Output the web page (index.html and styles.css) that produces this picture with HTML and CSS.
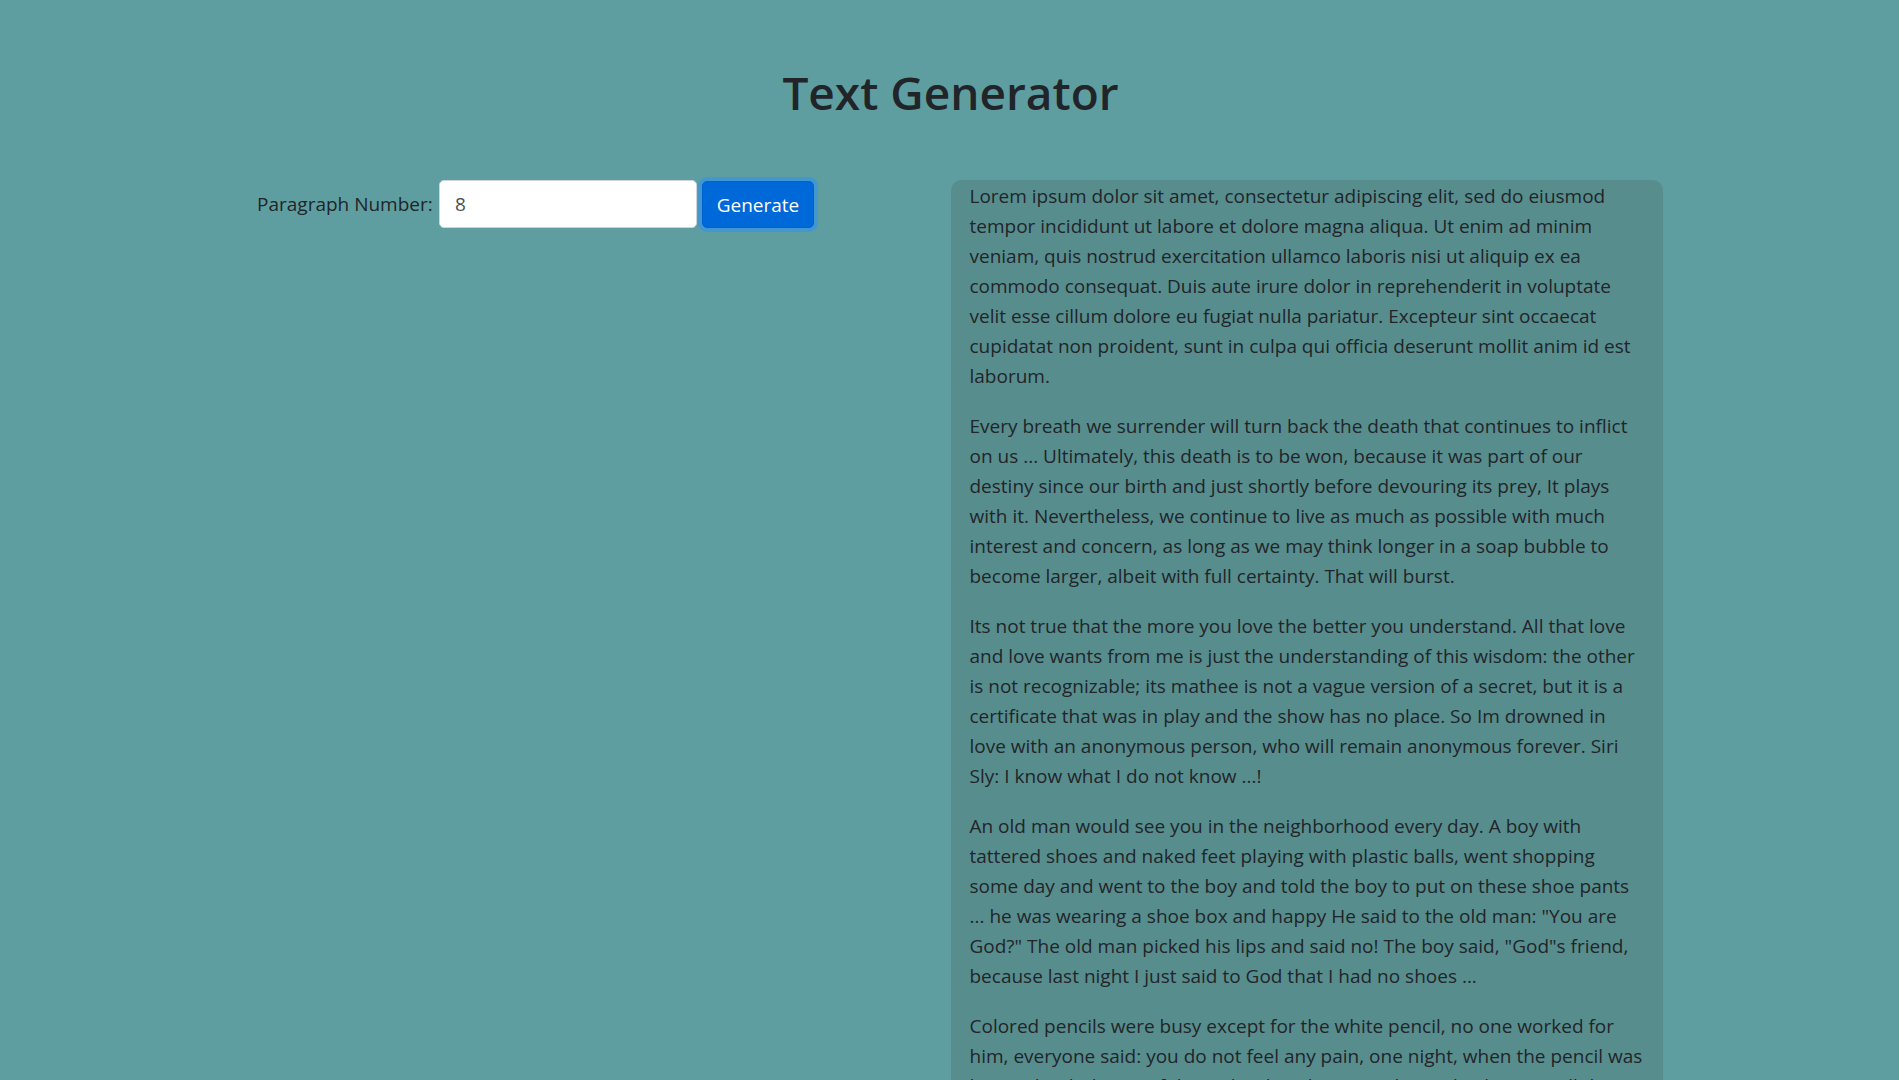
FILE: index.html
```html
<!DOCTYPE html>
<html lang="en">
<head>
<meta charset="utf-8">
<title>Text Generator</title>
<link rel="stylesheet" href="styles.css">
</head>
<body>
<main class="container">
  <h1 class="title">Text Generator</h1>
  <div class="row">
    <form class="generator">
      <label class="label" for="count">Paragraph Number:</label>
      <input class="field" id="count" type="text" value="8">
      <button class="button" type="button">Generate</button>
    </form>
    <section class="output">
      <p>Lorem ipsum dolor sit amet, consectetur adipiscing elit, sed do eiusmod<br>tempor incididunt ut labore et dolore magna aliqua. Ut enim ad minim<br>veniam, quis nostrud exercitation ullamco laboris nisi ut aliquip ex ea<br>commodo consequat. Duis aute irure dolor in reprehenderit in voluptate<br>velit esse cillum dolore eu fugiat nulla pariatur. Excepteur sint occaecat<br>cupidatat non proident, sunt in culpa qui officia deserunt mollit anim id est<br>laborum.</p>
      <p>Every breath we surrender will turn back the death that continues to inflict<br>on us ... Ultimately, this death is to be won, because it was part of our<br>destiny since our birth and just shortly before devouring its prey, It plays<br>with it. Nevertheless, we continue to live as much as possible with much<br>interest and concern, as long as we may think longer in a soap bubble to<br>become larger, albeit with full certainty. That will burst.</p>
      <p>Its not true that the more you love the better you understand. All that love<br>and love wants from me is just the understanding of this wisdom: the other<br>is not recognizable; its mathee is not a vague version of a secret, but it is a<br>certificate that was in play and the show has no place. So Im drowned in<br>love with an anonymous person, who will remain anonymous forever. Siri<br>Sly: I know what I do not know ...!</p>
      <p>An old man would see you in the neighborhood every day. A boy with<br>tattered shoes and naked feet playing with plastic balls, went shopping<br>some day and went to the boy and told the boy to put on these shoe pants<br>... he was wearing a shoe box and happy He said to the old man: "You are<br>God?" The old man picked his lips and said no! The boy said, "God"s friend,<br>because last night I just said to God that I had no shoes ...</p>
      <p>Colored pencils were busy except for the white pencil, no one worked for<br>him, everyone said: you do not feel any pain, one night, when the pencil was<br>lost in the darkness of the night, the white pencil went back to see all the</p>
    </section>
  </div>
</main>
</body>
</html>
```
FILE: styles.css
```css
*, *::before, *::after { box-sizing: border-box; }
html { background: #5f9ea0; }
body {
  margin: 0;
  padding-left: 2px;
  height: 100vh;
  overflow: hidden;
  color: #212529;
  font-family: "Segoe UI", "Open Sans", "Noto Sans", sans-serif;
  font-size: 19px;
  line-height: 30px;
}
.container { max-width: 1425px; margin: 0 auto; }
.title {
  margin: 0;
  padding: 62px 0 58px;
  font-size: 46px;
  font-weight: 600;
  line-height: 60px;
  text-align: center;
}
.row { display: grid; grid-template-columns: 1fr 1fr; align-items: start; }
.generator { display: flex; align-items: center; padding: 0 19px; }
.label { width: 182px; white-space: nowrap; }
.field {
  width: 258px;
  height: 48px;
  margin-right: 5px;
  padding: 8px 15px;
  border: 1px solid #ced4da;
  border-radius: 5px;
  background: #fff;
  color: #495057;
  font: inherit;
}
.button {
  width: 112px;
  height: 47px;
  padding: 8px 0;
  border: 1px solid #0062cc;
  border-radius: 5px;
  background: #0069d9;
  box-shadow: 0 0 0 4px rgba(38, 143, 255, .5);
  color: #fff;
  font: inherit;
}
.output {
  padding: 1px 19px 0;
  border-radius: 10px;
  background: #588d8e;
}
.output p { margin: 0 0 20px; white-space: nowrap; }
```
